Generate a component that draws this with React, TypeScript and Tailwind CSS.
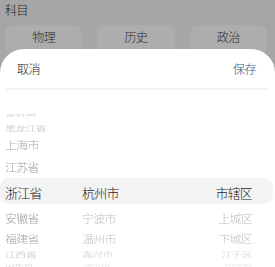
import React from "react";

type Row = {
  left: string;
  mid: string;
  right: string;
  h: string;
  size: string;
  scale: string;
  color: string;
  side: string;
  selected?: boolean;
};

const rows: Row[] = [
  { left: "吉林省", mid: "", right: "", h: "h-[11px]", size: "text-[11px]", scale: "scale-y-[0.35]", color: "text-[#cfcfcf]", side: "" },
  { left: "黑龙江省", mid: "", right: "", h: "h-[15px]", size: "text-[11px]", scale: "scale-y-[0.6]", color: "text-[#b8b8b8]", side: "" },
  { left: "上海市", mid: "", right: "", h: "h-[19px]", size: "text-[12px]", scale: "scale-y-[0.82]", color: "text-[#a8a8a8]", side: "" },
  { left: "江苏省", mid: "", right: "", h: "h-[26px]", size: "text-[12px]", scale: "scale-y-[0.95]", color: "text-[#9e9e9e]", side: "" },
  { left: "浙江省", mid: "杭州市", right: "市辖区", h: "h-[26px]", size: "text-[13px]", scale: "scale-y-100", color: "text-[#1c1c1c]", side: "", selected: true },
  { left: "安徽省", mid: "宁波市", right: "上城区", h: "h-[23px]", size: "text-[12px]", scale: "scale-y-[0.95]", color: "text-[#9e9e9e]", side: "blur-[0.6px] opacity-70" },
  { left: "福建省", mid: "温州市", right: "下城区", h: "h-[19px]", size: "text-[12px]", scale: "scale-y-[0.82]", color: "text-[#a8a8a8]", side: "blur-[0.6px] opacity-75" },
  { left: "江西省", mid: "嘉兴市", right: "江干区", h: "h-[12px]", size: "text-[11px]", scale: "scale-y-[0.6]", color: "text-[#b8b8b8]", side: "blur-[0.5px] opacity-70" },
  { left: "山东省", mid: "湖州市", right: "拱墅区", h: "h-[10px]", size: "text-[10px]", scale: "scale-y-[0.35]", color: "text-[#cfcfcf]", side: "blur-[0.4px] opacity-60" },
];

function PickerRow({ row }: { row: Row }) {
  const base = `${row.size} ${row.scale} ${row.color} leading-none whitespace-nowrap`;
  return (
    <div
      className={`flex items-center shrink-0 ${row.h} mr-[2px] ${
        row.selected ? "bg-[#f3f3f3] rounded-[9px]" : ""
      }`}
    >
      <div className="w-[82px] pl-[5px] tracking-[-0.8px]">
        <span className={`inline-block ${base}`}>{row.left}</span>
      </div>
      <div className="flex-1 tracking-[-0.8px]">
        <span className={`inline-block ${base} ${row.side}`}>{row.mid}</span>
      </div>
      <div className="w-[80px] pr-[21px] text-right tracking-[-0.8px]">
        <span className={`inline-block ${base} ${row.side}`}>{row.right}</span>
      </div>
    </div>
  );
}

export default function App() {
  return (
    <div className="h-[267px] w-[275px] overflow-hidden bg-[#a6a6a6] flex flex-col font-light font-['Noto_Sans_CJK_SC','Noto_Sans',sans-serif]">
      <div className="pl-[5px] pt-[2px] text-[12px] leading-[16px] text-[#1f1f1f] tracking-[-0.5px]">科目</div>
      <div className="flex gap-[15px] pl-[5px] pr-[8px] mt-[7px]">
        {["物理", "历史", "政治"].map((s) => (
          <div
            key={s}
            className="flex-1 h-[30px] rounded-[8px] bg-[#adadad] flex justify-center pt-[5px] text-[12px] leading-[14px] text-[#2a2a2a] tracking-[-0.5px]"
          >
            {s}
          </div>
        ))}
      </div>
      <div className="-mt-[6px] flex-1 bg-white rounded-t-[24px] flex flex-col">
        <div className="h-[39px] flex items-center justify-between pl-[17px] pr-[19px] text-[12px] tracking-[-0.5px]">
          <span className="text-[#1a1a1a]">取消</span>
          <span className="text-[#36597a]">保存</span>
        </div>
        <div className="mx-[6px] h-[2px] bg-[#f2f2f2]" />
        <div className="flex flex-col pt-[17px]">
          {rows.map((r, i) => (
            <PickerRow key={i} row={r} />
          ))}
        </div>
      </div>
    </div>
  );
}
